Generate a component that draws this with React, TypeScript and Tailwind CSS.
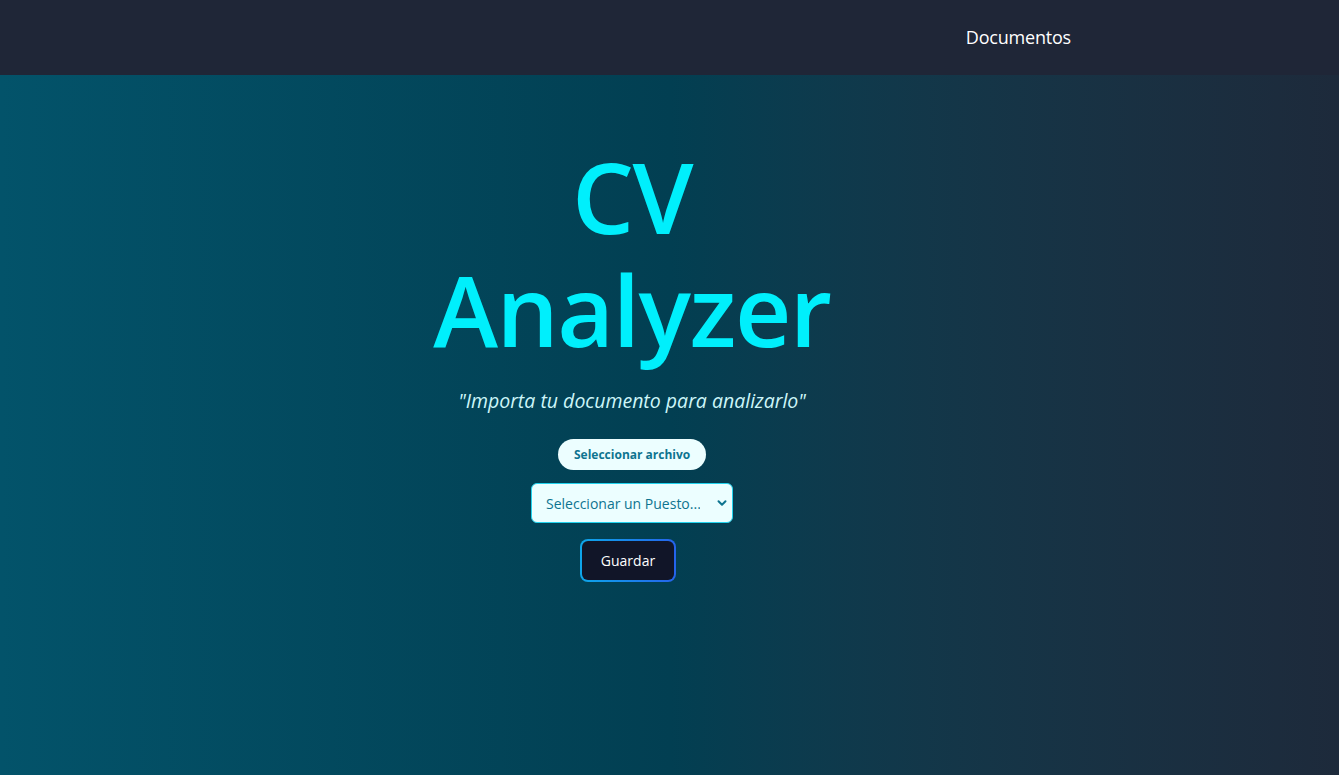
import { useState } from "react";

const puestos = ["Desarrollador Frontend", "Desarrollador Backend", "Analista de Datos", "Diseñador UX"];

export default function App() {
  const [puesto, setPuesto] = useState("");
  const [fileName, setFileName] = useState<string | null>(null);

  return (
    <div className="min-h-screen flex flex-col font-['Open_Sans',sans-serif]">
      {/* Navbar */}
      <nav className="h-[75px] bg-[#1f2637] flex items-center justify-end pr-[268px] shrink-0">
        <a href="#" className="text-white text-[18px] tracking-[-0.2px]">Documentos</a>
      </nav>

      {/* Main */}
      <main className="flex-1 h-[700px] bg-gradient-to-r from-[#03536a] via-[#023f52] to-[#1d2a3b] flex flex-col items-center pt-[65px] pr-[75px]">
        <h1 className="w-[440px] text-center text-[#00effc] text-[98px] leading-[113px] font-semibold tracking-[-1.5px]">
          CV Analyzer
        </h1>
        <p className="mt-[20px] text-[#cdf6f9] text-[19.5px] italic">
          "Importa tu documento para analizarlo"
        </p>

        <form className="mt-[24px] flex flex-col items-center" onSubmit={e => e.preventDefault()}>
          <label className="h-[31px] w-[148px] rounded-full bg-[#ecfeff] text-[#0e7490] text-[12px] font-bold flex items-center pl-[16px] cursor-pointer">
            {fileName ? fileName : "Seleccionar archivo"}
            <input
              type="file"
              className="hidden"
              onChange={e => setFileName(e.target.files?.[0]?.name ?? null)}
            />
          </label>

          <div className="relative mt-[13px]">
            <select
              value={puesto}
              onChange={e => setPuesto(e.target.value)}
              className="appearance-none h-[40px] w-[202px] rounded-md border border-[#22d3ee] bg-[#ecfeff] text-[#0e7490] text-[14px] pl-[14px] pr-8 outline-none"
            >
              <option value="">Seleccionar un Puesto...</option>
              {puestos.map(p => (
                <option key={p} value={p}>{p}</option>
              ))}
            </select>
            <svg className="absolute right-[6px] top-[15px] pointer-events-none" width="10" height="10" viewBox="0 0 10 10">
              <path d="M1.5 3.2 L5 6.7 L8.5 3.2" fill="none" stroke="#0e7490" strokeWidth="2" strokeLinecap="round" strokeLinejoin="round" />
            </svg>
          </div>

          <div className="mt-[16px] mr-[8px] p-[2px] rounded-lg bg-gradient-to-r from-[#0ea5e9] to-[#2563eb]">
            <button type="submit" className="h-[39px] w-[92px] rounded-[6px] bg-[#111528] text-white text-[14px] font-medium">
              Guardar
            </button>
          </div>
        </form>
      </main>
    </div>
  );
}
